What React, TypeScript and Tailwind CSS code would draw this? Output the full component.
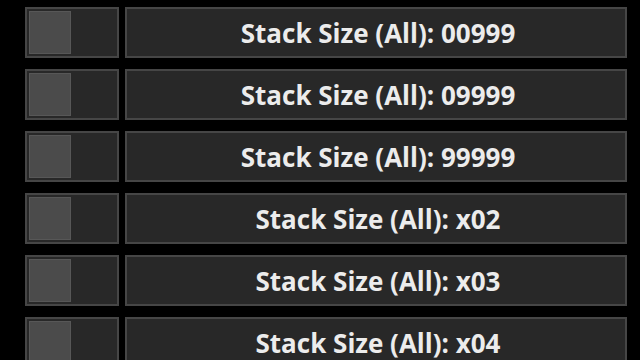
const rows = ['00999', '09999', '99999', 'x02', 'x03', 'x04'];

function Row({ value }: { value: string }) {
  return (
    <div className="flex h-[51px] shrink-0 gap-[6px]">
      <div className="flex w-[94px] shrink-0 items-stretch border-2 border-[#464646] bg-[#282828] p-[2px]">
        <div className="w-[42px] border border-[#575757] bg-[#4b4b4b]" />
      </div>
      <div className="flex w-[502px] shrink-0 items-center justify-center border-2 border-[#464646] bg-[#282828] pl-[4px] pt-[2px]">
        <span className="text-[26px] font-bold text-[#ececec]" style={{ fontFamily: '"Open Sans", "Noto Sans", sans-serif' }}>
          Stack Size (All): {value}
        </span>
      </div>
    </div>
  );
}

export default function App() {
  return (
    <div className="h-[360px] w-[640px] overflow-hidden bg-black">
      <div className="flex flex-col gap-[11px] pl-[25px] pt-[7px]">
        {rows.map(value => (
          <Row key={value} value={value} />
        ))}
      </div>
    </div>
  );
}
